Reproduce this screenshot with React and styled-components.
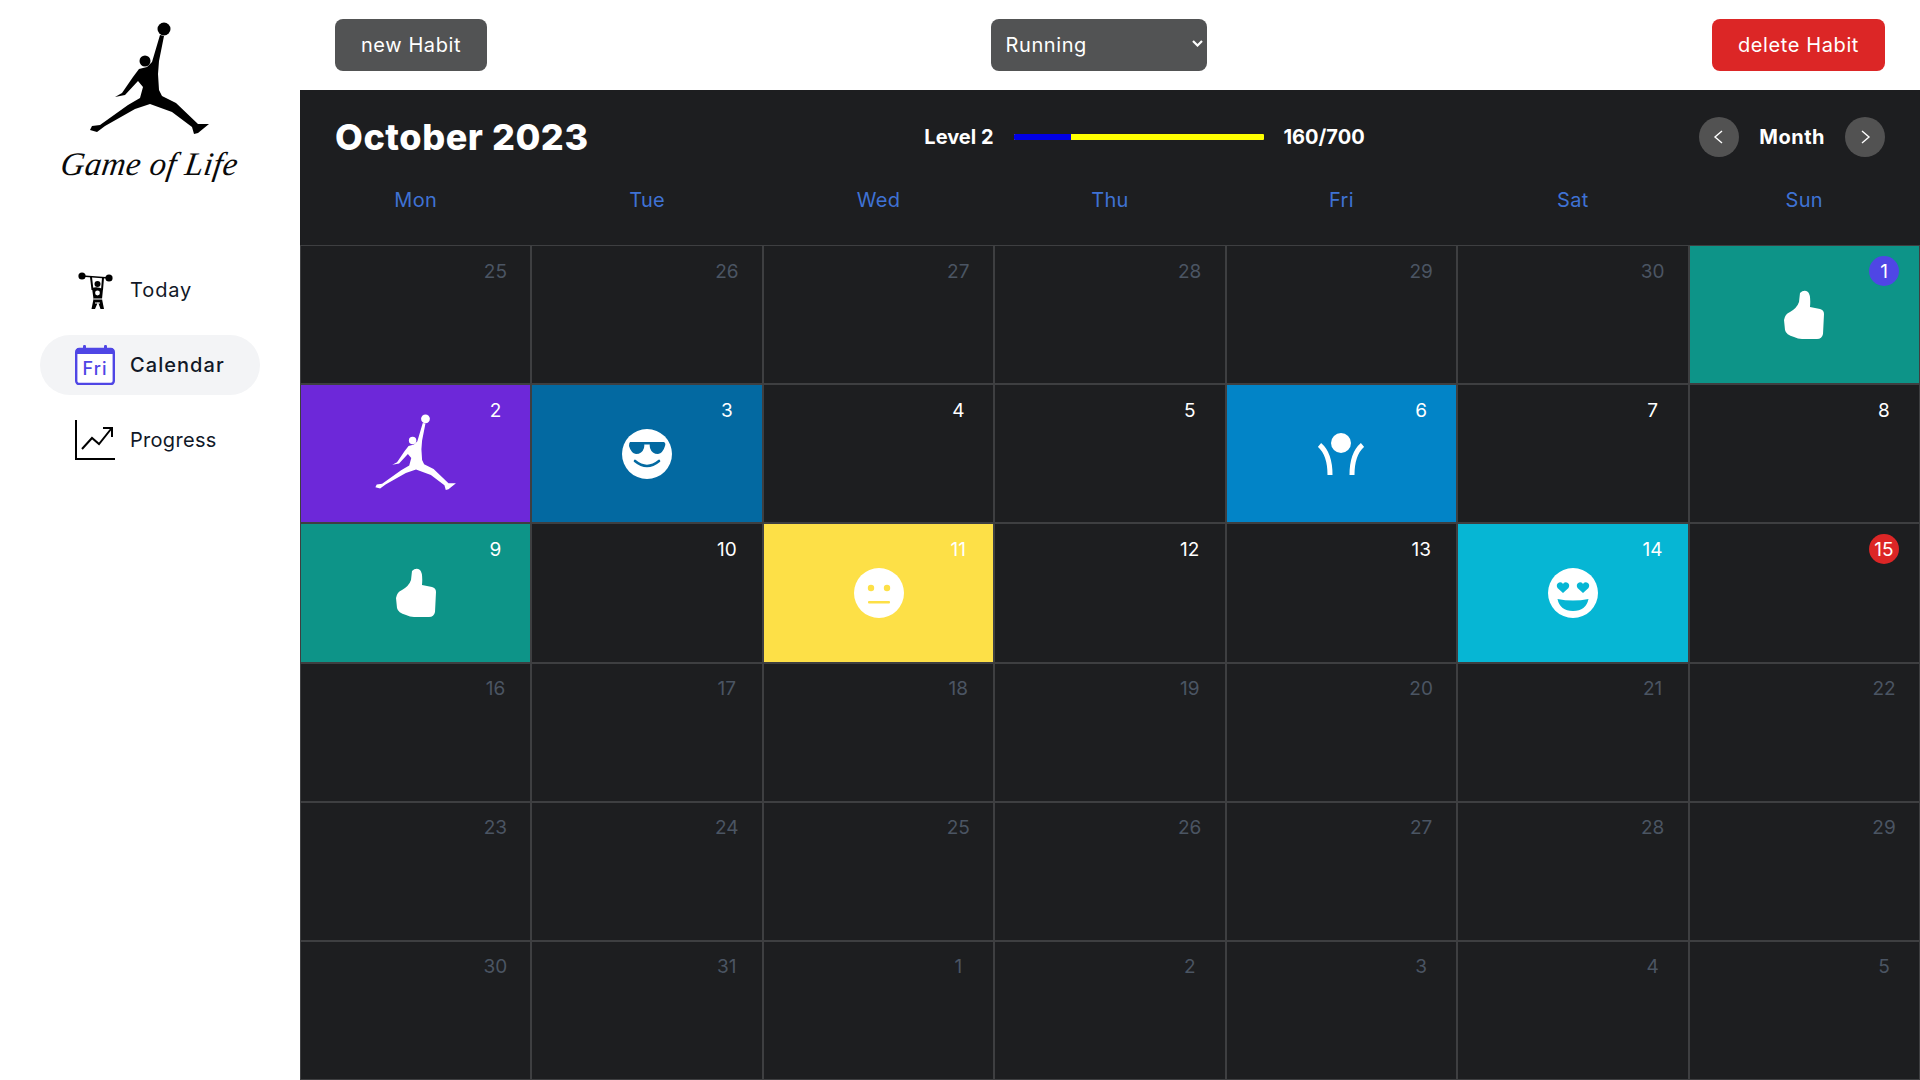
import React from "react";
import styled, { createGlobalStyle } from "styled-components";

const Global = createGlobalStyle`
  html, body { margin: 0; padding: 0; background: #fff; }
  * { box-sizing: border-box; }
  body { font-family: Inter, "Noto Sans", "Liberation Sans", sans-serif; }
`;

const Page = styled.div`
  display: flex;
  width: 1920px;
  height: 1080px;
  overflow: hidden;
`;

const Sidebar = styled.aside`
  width: 300px;
  flex: none;
  display: flex;
  flex-direction: column;
  align-items: center;
`;

const Logo = styled.div`
  height: 252px;
  padding-top: 19px;
  display: flex;
  flex-direction: column;
  align-items: center;
  color: #000;
`;

const LogoText = styled.div`
  font-family: "Liberation Serif", serif;
  font-style: italic;
  font-size: 33px;
  line-height: 44px;
  margin-top: 5px;
  letter-spacing: 0.4px;
  transform: skewX(-8deg);
  color: #0a0a0a;
`;

const Nav = styled.nav`
  width: 220px;
  display: flex;
  flex-direction: column;
  gap: 15px;
  margin-top: 8px;
`;

const NavItem = styled.div`
  height: 60px;
  border-radius: 30px;
  padding-left: 35px;
  display: flex;
  align-items: center;
  gap: 15px;
  font-size: 20px;
  letter-spacing: ${(p) => p.$spacing};
  color: #111827;
  font-weight: ${(p) => (p.$active ? 500 : 400)};
  background: ${(p) => (p.$active ? "#f3f4f6" : "transparent")};
`;

const Main = styled.main`
  flex: 1;
  min-width: 0;
  display: flex;
  flex-direction: column;
`;

const TopBar = styled.header`
  height: 90px;
  flex: none;
  padding: 0 35px;
  display: flex;
  align-items: center;
  justify-content: space-between;
`;

const Button = styled.button`
  height: 52px;
  width: ${(p) => p.$w}px;
  border: 0;
  border-radius: 8px;
  background: ${(p) => p.$bg};
  color: #fff;
  font: 400 20px Inter, sans-serif;
  letter-spacing: 0.6px;
`;

const SelectWrap = styled.div`
  position: relative;
  width: 216px;
  height: 52px;
  margin-right: 2px;
`;

const Select = styled.select`
  appearance: none;
  display: block;
  width: 100%;
  height: 100%;
  border: 0;
  border-radius: 8px;
  background-color: #525354;
  color: #fff;
  font: 400 20px Inter, sans-serif;
  letter-spacing: 0.6px;
  padding: 0 15px;
`;

const SelectArrow = styled.svg`
  position: absolute;
  right: 4px;
  top: 21px;
  pointer-events: none;
`;

const Panel = styled.section`
  flex: 1;
  min-height: 0;
  background: #1d1e20;
  color: #fff;
  display: flex;
  flex-direction: column;
`;

const PanelHead = styled.div`
  height: 85px;
  padding: 9px 35px 0;
  display: grid;
  grid-template-columns: 1fr auto 1fr;
  align-items: center;
`;

const Title = styled.h1`
  margin: 0;
  font-size: 36px;
  font-weight: 800;
  letter-spacing: 0.55px;
  color: #fff;
`;

const Level = styled.div`
  display: flex;
  align-items: center;
  gap: 20px;
  font-size: 20px;
  font-weight: 700;
  margin-left: 69px;
`;

const Bar = styled.div`
  width: 250px;
  height: 6px;
  background: #ffff00;
  border-radius: 1px;
  overflow: hidden;
`;

const BarFill = styled.div`
  height: 100%;
  background: #0000e6;
`;

const MonthNav = styled.div`
  justify-self: end;
  display: flex;
  align-items: center;
  gap: 20px;
  font-size: 20px;
  font-weight: 700;
  letter-spacing: 0.5px;
`;

const RoundButton = styled.div`
  width: 40px;
  height: 40px;
  border-radius: 50%;
  background: #525252;
  display: flex;
  align-items: center;
  justify-content: center;
`;

const WeekRow = styled.div`
  height: 70px;
  display: grid;
  grid-template-columns: repeat(7, 1fr);
  padding-bottom: 20px;
`;

const WeekDay = styled.div`
  display: flex;
  align-items: center;
  justify-content: center;
  color: #3f72d4;
  font-size: 20px;
  letter-spacing: 0.3px;
`;

const Grid = styled.div`
  flex: 1;
  min-height: 0;
  display: grid;
  grid-template-columns: repeat(7, 1fr);
  grid-template-rows: repeat(6, 1fr);
`;

const Cell = styled.div`
  position: relative;
  border: 1px solid #3e3f41;
  background: ${(p) => p.$bg || "transparent"};
  display: flex;
  align-items: center;
  justify-content: center;
  color: #fff;
`;

const DayNumber = styled.span`
  position: absolute;
  top: 10px;
  right: 20px;
  width: 30px;
  height: 30px;
  border-radius: 50%;
  display: flex;
  align-items: center;
  justify-content: center;
  font-size: 19px;
  color: ${(p) => (p.$muted ? "#4b5563" : "#fff")};
  background: ${(p) => p.$badge || "transparent"};
`;

const Jumpman = ({ width, height }) => (
  <svg width={width} height={height} viewBox="85 20 130 118" fill="currentColor">
    <circle cx="164" cy="30" r="6.5" />
    <circle cx="145" cy="62" r="5.5" />
    <path d="M160 36 L164 37 L159 62 L158 75 L159 91 L162 97 L176 104 L198 125 L209 125 L198 134 L194 135 L192 128 L172 113 L150 105 L135 110 L105 127 L97 133 L90 131 L92 127 L100 126 L128 106 L140 99 L143 88 L138 82 L125 96 L115 98 L122 94 L133 78 L139 70 L147 68 L152 63 Z" />
  </svg>
);

const Thumb = () => (
  <svg width="40" height="50" viewBox="0 0 40 50" fill="#fff">
    <path d="M16 3 Q20 -1 24 2 Q27 5 26 17 L36 19 Q40 20 40 24 L39 44 Q38 49 33 49 L18 49 Q14 49 10 47 Q2 45 1 40 L0 30 Q1 24 6 22 Q13 18 15 12 Z" />
  </svg>
);

const Cool = ({ c }) => (
  <svg width="50" height="50" viewBox="0 0 50 50">
    <circle cx="25" cy="25" r="25" fill="#fff" />
    <path d="M8 13 H21 Q23 14 22 19 Q20 25 14 25 Q9 24 7 17 Q7 14 8 13 Z M29 13 H42 Q44 14 43 17 Q41 24 36 25 Q30 25 28 19 Q27 14 29 13 Z M21 13 H29 V15.5 H21 Z" fill={c} />
    <path d="M13 32 Q25 42 37 32" fill="none" stroke={c} strokeWidth="2.6" strokeLinecap="round" />
  </svg>
);

const Neutral = ({ c }) => (
  <svg width="50" height="50" viewBox="0 0 50 50">
    <circle cx="25" cy="25" r="25" fill="#fff" />
    <circle cx="17" cy="20" r="3.2" fill={c} />
    <circle cx="33" cy="20" r="3.2" fill={c} />
    <rect x="14" y="33" width="22" height="2.4" rx="1" fill={c} />
  </svg>
);

const Hearts = ({ c }) => (
  <svg width="50" height="50" viewBox="0 0 50 50">
    <circle cx="25" cy="25" r="25" fill="#fff" />
    <path d="M15 25 L9.5 20 Q7.5 16 11 14.5 Q14 13.5 15 16 Q16 13.5 19 14.5 Q22.5 16 20.5 20 Z" fill={c} />
    <path d="M35 25 L29.5 20 Q27.5 16 31 14.5 Q34 13.5 35 16 Q36 13.5 39 14.5 Q42.5 16 40.5 20 Z" fill={c} />
    <path d="M9.5 31 Q25 34 40.5 31 Q38 43 25 43 Q12 43 9.5 31 Z" fill={c} />
  </svg>
);

const Cheer = () => (
  <svg width="46" height="42" viewBox="0 0 46 42" fill="none">
    <circle cx="23" cy="10" r="10" fill="#fff" />
    <path d="M1.5 12 Q12 21 12 42 M44.5 12 Q34 21 34 42" stroke="#fff" strokeWidth="5" />
  </svg>
);

const Lifter = () => (
  <svg width="40" height="42" viewBox="0 0 40 42">
    <circle cx="7" cy="7" r="3.6" fill="#000" />
    <circle cx="34" cy="9" r="3.6" fill="#000" />
    <path d="M7 7 L34 9" stroke="#000" strokeWidth="1.4" />
    <path d="M16 8 L17.5 21 M28 9 L27 21" stroke="#000" strokeWidth="2" />
    <circle cx="22.5" cy="15" r="3" fill="#000" />
    <path d="M17 19 Q22 17 28 20 L27 30 L29 40 L25.5 40 L23 33 L20 40 L16.5 40 L18.5 30 Z" fill="#000" />
    <circle cx="22.5" cy="24" r="2.4" fill="#fff" />
    <path d="M18.5 30 L27 30 M20 34 L25 34" stroke="#fff" strokeWidth="1" />
  </svg>
);

const CalendarIcon = () => (
  <svg width="40" height="40" viewBox="0 0 40 40">
    <rect x="1.2" y="4" width="37.6" height="35" rx="3" fill="#fff" stroke="#4f46e5" strokeWidth="2.4" />
    <path d="M1 7 Q1 3 4 3 H36 Q39 3 39 7 V9 H1 Z" fill="#4f46e5" />
    <rect x="8" y="0" width="3" height="5" rx="1.2" fill="#4f46e5" />
    <rect x="29" y="0" width="3" height="5" rx="1.2" fill="#4f46e5" />
    <text x="20" y="30" textAnchor="middle" fontFamily="Inter, sans-serif" fontSize="18" fill="#4f46e5">Fri</text>
  </svg>
);

const ProgressIcon = () => (
  <svg width="40" height="40" viewBox="0 0 40 40" fill="none" stroke="#000">
    <path d="M1 0 V39 H40" strokeWidth="2" />
    <path d="M7 29 L17 18 L24 24 L36 9 M28 8 H37 V17" strokeWidth="2" />
  </svg>
);

const Chevron = ({ left }) => (
  <svg width="18" height="18" viewBox="0 0 18 18" fill="none" stroke="#fff" strokeWidth="1.4">
    <path d={left ? "M12 3 L5 9 L12 15" : "M6 3 L13 9 L6 15"} />
  </svg>
);

const days = ["Mon", "Tue", "Wed", "Thu", "Fri", "Sat", "Sun"];

const prev = [25, 26, 27, 28, 29, 30];
const next = [1, 2, 3, 4, 5];
const marks = {
  1: { bg: "#0d9488", icon: <Thumb /> },
  2: { bg: "#6d28d9", icon: <span style={{ color: "#fff" }}><Jumpman width={88} height={80} /></span> },
  3: { bg: "#0369a1", icon: <Cool c="#0369a1" /> },
  6: { bg: "#0284c7", icon: <Cheer /> },
  9: { bg: "#0d9488", icon: <Thumb /> },
  11: { bg: "#fde047", icon: <Neutral c="#fde047" /> },
  14: { bg: "#06b6d4", icon: <Hearts c="#06b6d4" /> },
};

const cells = [
  ...prev.map((d) => ({ d, muted: true })),
  ...Array.from({ length: 31 }, (_, i) => i + 1).map((d) => ({ d, muted: d > 15, current: true })),
  ...next.map((d) => ({ d, muted: true })),
];

const badgeFor = (c) => {
  if (!c.current) return undefined;
  if (c.d === 1) return "#4f46e5";
  if (c.d === 15) return "#dc2626";
  return undefined;
};

export default function App() {
  return (
    <Page>
      <Global />
      <Sidebar>
        <Logo>
          <Jumpman width={130} height={118} />
          <LogoText>Game of Life</LogoText>
        </Logo>
        <Nav>
          <NavItem $spacing="0.9px"><Lifter />Today</NavItem>
          <NavItem $active $spacing="1.05px"><CalendarIcon />Calendar</NavItem>
          <NavItem $spacing="0.3px"><ProgressIcon />Progress</NavItem>
        </Nav>
      </Sidebar>
      <Main>
        <TopBar>
          <Button $w={152} $bg="#525354">new Habit</Button>
          <SelectWrap>
            <Select defaultValue="Running">
              <option>Running</option>
            </Select>
            <SelectArrow width="11" height="7" viewBox="0 0 11 7" fill="none" stroke="#fff" strokeWidth="2.2">
              <path d="M1 1 L5.5 5.5 L10 1" />
            </SelectArrow>
          </SelectWrap>
          <Button $w={173} $bg="#dc2626">delete Habit</Button>
        </TopBar>
        <Panel>
          <PanelHead>
            <Title>October 2023</Title>
            <Level>
              <span>Level 2</span>
              <Bar><BarFill style={{ width: `${(160 / 700) * 100}%` }} /></Bar>
              <span>160/700</span>
            </Level>
            <MonthNav>
              <RoundButton><Chevron left /></RoundButton>
              <span>Month</span>
              <RoundButton><Chevron /></RoundButton>
            </MonthNav>
          </PanelHead>
          <WeekRow>
            {days.map((d) => <WeekDay key={d}>{d}</WeekDay>)}
          </WeekRow>
          <Grid>
            {cells.map((c, i) => {
              const mark = c.current ? marks[c.d] : null;
              return (
                <Cell key={i} $bg={mark?.bg}>
                  <DayNumber $muted={c.muted} $badge={badgeFor(c)}>{c.d}</DayNumber>
                  {mark?.icon}
                </Cell>
              );
            })}
          </Grid>
        </Panel>
      </Main>
    </Page>
  );
}
